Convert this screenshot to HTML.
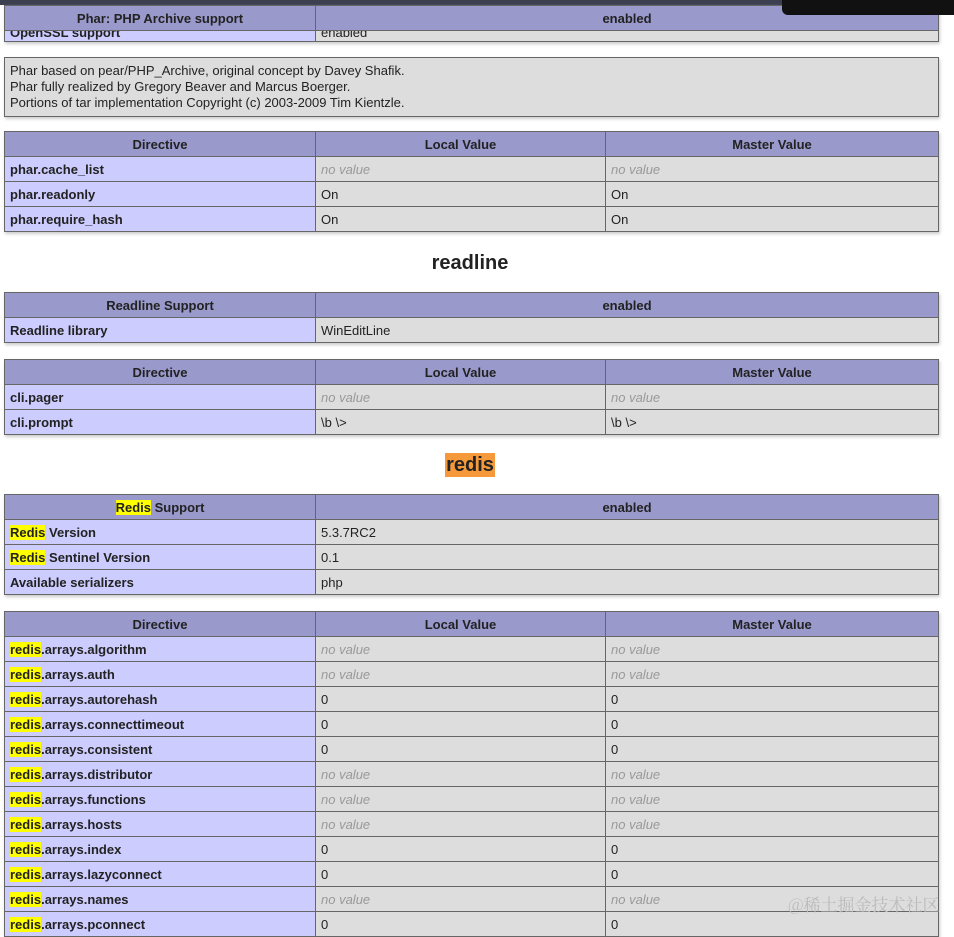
<!DOCTYPE html>
<html><head><meta charset="utf-8"><style>
body{margin:0;width:954px;height:919px;overflow:hidden;background:#fff;font-family:"Liberation Sans","Noto Sans CJK SC",sans-serif;font-size:13px;color:#222;position:relative}
table{position:absolute;left:4px;width:935px;border-collapse:collapse;box-shadow:1px 2px 3px #ccc;table-layout:fixed}
td,th{border:1px solid #666;height:25px;padding:0 5px;box-sizing:border-box;vertical-align:middle;white-space:nowrap;overflow:hidden}
th{background:#9999cc;font-weight:bold;text-align:center}
td.e{background:#ccccff;font-weight:bold}
td.v{background:#ddd}
i{color:#999}
.y{background:#ff0}
h2{position:absolute;margin:0;font-size:20px;font-weight:bold;left:0;width:940px;text-align:center}
</style></head><body>
<div style="position:absolute;left:0;top:0;width:954px;height:5px;background:#3b3f50"></div>

<table style="top:5px;height:36px">
<col style="width:311px"><col>
<tr><th>Phar: PHP Archive support</th><th>enabled</th></tr>
<tr><td class="e" style="height:11px;line-height:4px;vertical-align:top">OpenSSL support</td><td class="v" style="height:11px;line-height:4px;vertical-align:top">enabled</td></tr>
</table>
<div style="position:absolute;left:782px;top:0;width:172px;height:15px;background:#111;border-radius:0 0 0 6px"></div>

<table style="top:57px"><tr><td class="v" style="height:59px;line-height:16px">Phar based on pear/PHP_Archive, original concept by Davey Shafik.<br>Phar fully realized by Gregory Beaver and Marcus Boerger.<br>Portions of tar implementation Copyright (c) 2003-2009 Tim Kientzle.</td></tr></table>

<table style="top:131px">
<col style="width:311px"><col style="width:290px"><col>
<tr><th>Directive</th><th>Local Value</th><th>Master Value</th></tr>
<tr><td class="e">phar.cache_list</td><td class="v"><i>no value</i></td><td class="v"><i>no value</i></td></tr>
<tr><td class="e">phar.readonly</td><td class="v">On</td><td class="v">On</td></tr>
<tr><td class="e">phar.require_hash</td><td class="v">On</td><td class="v">On</td></tr>
</table>

<h2 style="top:252px">readline</h2>

<table style="top:292px">
<col style="width:311px"><col>
<tr><th>Readline Support</th><th>enabled</th></tr>
<tr><td class="e">Readline library</td><td class="v">WinEditLine</td></tr>
</table>

<table style="top:359px">
<col style="width:311px"><col style="width:290px"><col>
<tr><th>Directive</th><th>Local Value</th><th>Master Value</th></tr>
<tr><td class="e">cli.pager</td><td class="v"><i>no value</i></td><td class="v"><i>no value</i></td></tr>
<tr><td class="e">cli.prompt</td><td class="v">\b \&gt;</td><td class="v">\b \&gt;</td></tr>
</table>

<h2 style="top:454px"><span style="background:#f5993a;padding:1px 1px">redis</span></h2>

<table style="top:494px">
<col style="width:311px"><col>
<tr><th><span class="y">Redis</span> Support</th><th>enabled</th></tr>
<tr><td class="e"><span class="y">Redis</span> Version</td><td class="v">5.3.7RC2</td></tr>
<tr><td class="e"><span class="y">Redis</span> Sentinel Version</td><td class="v">0.1</td></tr>
<tr><td class="e">Available serializers</td><td class="v">php</td></tr>
</table>

<table style="top:611px">
<col style="width:311px"><col style="width:290px"><col>
<tr><th>Directive</th><th>Local Value</th><th>Master Value</th></tr>
<tr><td class="e"><span class="y">redis</span>.arrays.algorithm</td><td class="v"><i>no value</i></td><td class="v"><i>no value</i></td></tr>
<tr><td class="e"><span class="y">redis</span>.arrays.auth</td><td class="v"><i>no value</i></td><td class="v"><i>no value</i></td></tr>
<tr><td class="e"><span class="y">redis</span>.arrays.autorehash</td><td class="v">0</td><td class="v">0</td></tr>
<tr><td class="e"><span class="y">redis</span>.arrays.connecttimeout</td><td class="v">0</td><td class="v">0</td></tr>
<tr><td class="e"><span class="y">redis</span>.arrays.consistent</td><td class="v">0</td><td class="v">0</td></tr>
<tr><td class="e"><span class="y">redis</span>.arrays.distributor</td><td class="v"><i>no value</i></td><td class="v"><i>no value</i></td></tr>
<tr><td class="e"><span class="y">redis</span>.arrays.functions</td><td class="v"><i>no value</i></td><td class="v"><i>no value</i></td></tr>
<tr><td class="e"><span class="y">redis</span>.arrays.hosts</td><td class="v"><i>no value</i></td><td class="v"><i>no value</i></td></tr>
<tr><td class="e"><span class="y">redis</span>.arrays.index</td><td class="v">0</td><td class="v">0</td></tr>
<tr><td class="e"><span class="y">redis</span>.arrays.lazyconnect</td><td class="v">0</td><td class="v">0</td></tr>
<tr><td class="e"><span class="y">redis</span>.arrays.names</td><td class="v"><i>no value</i></td><td class="v"><i>no value</i></td></tr>
<tr><td class="e"><span class="y">redis</span>.arrays.pconnect</td><td class="v">0</td><td class="v">0</td></tr>
</table>

<div style="position:absolute;left:788px;top:891px;font-size:17px;color:#bbb;font-family:'Noto Serif CJK SC','Noto Sans CJK SC',serif">@稀土掘金技术社区</div>
</body></html>
